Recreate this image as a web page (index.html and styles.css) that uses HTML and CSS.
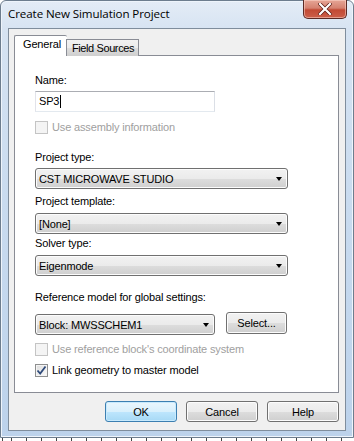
FILE: index.html
```html
<!DOCTYPE html>
<html>
<head>
<meta charset="utf-8">
<link rel="stylesheet" href="styles.css">
</head>
<body>
<div class="window">
  <div class="titlebar">
    <span class="title">Create New Simulation Project</span>
    <div class="close">
      <svg width="14" height="12" viewBox="0 0 14 12"><path d="M2 1 L12 11 M12 1 L2 11" stroke="#5a1a12" stroke-width="3.6" stroke-linecap="square"/><path d="M2 1 L12 11 M12 1 L2 11" stroke="#fff" stroke-width="2.2" stroke-linecap="square"/></svg>
    </div>
  </div>
  <div class="client">
    <div class="tabs">
      <div class="tab active">General</div>
      <div class="tab other">Field Sources</div>
    </div>
    <div class="panel">
      <div class="lbl name">Name:</div>
      <div class="input">SP3<span class="caret"></span></div>
      <div class="check disabled c1"><span class="box"></span><span>Use assembly information</span></div>
      <div class="lbl ptype">Project type:</div>
      <div class="combo wide">
        <span>CST MICROWAVE STUDIO</span><span class="arrow"></span>
      </div>
      <div class="lbl ptemplate">Project template:</div>
      <div class="combo wide">
        <span>[None]</span><span class="arrow"></span>
      </div>
      <div class="lbl solver">Solver type:</div>
      <div class="combo wide">
        <span>Eigenmode</span><span class="arrow"></span>
      </div>
      <div class="lbl ref">Reference model for global settings:</div>
      <div class="row">
        <div class="combo short"><span>Block: MWSSCHEM1</span><span class="arrow"></span></div>
        <div class="btn select">Select...</div>
      </div>
      <div class="check disabled c2"><span class="box"></span><span>Use reference block's coordinate system</span></div>
      <div class="check c3"><span class="box checked"><svg width="11" height="11" viewBox="0 0 11 11"><path d="M1.5 5.5 L4.2 8.5 L9.5 1.5" fill="none" stroke="#2e4a7a" stroke-width="1.8"/></svg></span><span>Link geometry to master model</span></div>
    </div>
    <div class="buttons">
      <div class="btn default">OK</div>
      <div class="btn">Cancel</div>
      <div class="btn">Help</div>
    </div>
  </div>
</div>
<div class="ticks"></div>
</body>
</html>
```

FILE: styles.css
```css
html, body {
  margin: 0;
  padding: 0;
  background: #ffffff;
}
body {
  width: 354px;
  height: 441px;
  overflow: hidden;
  font-family: "Liberation Sans", Arial, sans-serif;
  font-size: 11px;
  letter-spacing: -0.15px;
  color: #000;
  white-space: nowrap;
}
.window {
  box-sizing: border-box;
  width: 354px;
  height: 438px;
  border: 1px solid #6d7d8e;
  border-radius: 6px 6px 0 0;
  background: linear-gradient(180deg, #e4ecf6 0px, #d6e3f2 30px, #c9dbef 200px, #bcd2eb 438px);
  box-shadow: inset 0 0 0 1px #eef4fb;
  display: flex;
  flex-direction: column;
  padding: 0 7px 6px 7px;
}
.titlebar {
  height: 27px;
  display: flex;
  align-items: flex-start;
  position: relative;
  flex: none;
}
.title {
  font-family: "Open Sans", "Noto Sans", sans-serif;
  font-size: 11.6px;
  color: #000;
  margin-top: 5px;
  letter-spacing: -0.1px;
}
.close {
  position: absolute;
  right: -1px;
  top: -1px;
  width: 44px;
  height: 19px;
  box-sizing: border-box;
  border: 1px solid #5b2a25;
  border-top: none;
  border-radius: 0 0 5px 5px;
  background: linear-gradient(180deg, #e6a696 0%, #d58170 45%, #c24a34 55%, #cc5f4a 100%);
  box-shadow: inset 0 0 0 1px rgba(255,220,210,0.5);
  display: flex;
  align-items: center;
  justify-content: center;
}
.client {
  flex: 1;
  box-sizing: border-box;
  border: 1px solid #7f8d9c;
  background: #f0f0f0;
  padding: 7px 6px 0 5px;
  display: flex;
  flex-direction: column;
}
.tabs {
  display: flex;
  align-items: flex-end;
  height: 20px;
  position: relative;
  z-index: 1;
  margin-bottom: -1px;
}
.tab {
  box-sizing: border-box;
  border: 1px solid #898c95;
  border-bottom: none;
  height: 17px;
  padding: 0 0 0 5px;
  line-height: 17px;
  background: linear-gradient(180deg, #f2f2f2 0%, #ebebeb 50%, #dddddd 51%, #cfcfcf 100%);
  margin-left: -1px;
  width: 73px;
  overflow: hidden;
}
.tab.other { letter-spacing: -0.4px; }
.tab.active {
  height: 21px;
  margin-left: 0;
  background: #ffffff;
  padding: 0 0 0 8px;
  line-height: 17px;
  border-right: none;
  width: 53px;
  border-radius: 2px 2px 0 0;
}
.panel {
  box-sizing: border-box;
  height: 338px;
  background: #fff;
  border: 1px solid #898c95;
  padding: 18px 0 0 20px;
  display: flex;
  flex-direction: column;
  align-items: flex-start;
}
.lbl {
  height: 13px;
  line-height: 13px;
}
.lbl.name { margin-bottom: 4px; }
.lbl.ptype { margin-top: 17px; margin-bottom: 4px; }
.lbl.ptemplate { margin-top: 6px; margin-bottom: 5px; }
.lbl.solver { margin-top: 3px; margin-bottom: 5px; }
.lbl.ref { margin-top: 15px; margin-bottom: 4px; }
.input {
  box-sizing: border-box;
  width: 180px;
  height: 21px;
  border: 1px solid #abadb3;
  border-color: #abadb3 #dbdfe6 #e3e9ef #e2e3ea;
  padding: 0 3px;
  line-height: 19px;
  display: flex;
  align-items: center;
}
.caret {
  display: inline-block;
  width: 1px;
  height: 13px;
  background: #000;
  margin-left: 1px;
}
.check {
  display: flex;
  align-items: center;
  height: 13px;
  line-height: 13px;
}
.check .box {
  box-sizing: border-box;
  width: 13px;
  height: 13px;
  border: 1px solid #8e8f8f;
  background: linear-gradient(135deg, #dcdcdc, #fbfbfb);
  box-shadow: inset 0 0 0 1px #f4f4f4;
  margin-right: 4px;
  display: flex;
  align-items: center;
  justify-content: center;
}
.check.disabled { color: #a0a0a0; }
.check.disabled .box {
  border-color: #c4c4c4;
  background: #f4f4f4;
  box-shadow: none;
}
.c1 { margin-top: 9px; }
.c2 { margin-top: 8px; }
.c3 { margin-top: 8px; }
.combo {
  box-sizing: border-box;
  height: 21px;
  border: 1px solid #707070;
  border-radius: 3px;
  background: linear-gradient(180deg, #f2f2f2 0%, #ebebeb 50%, #dddddd 51%, #cfcfcf 100%);
  box-shadow: inset 0 0 0 1px #fcfcfc;
  display: flex;
  align-items: center;
  justify-content: space-between;
  padding: 0 5px 0 3px;
}
.combo.wide { width: 253px; }
.combo.short { width: 180px; margin-top: 2px; }
.arrow {
  width: 0;
  height: 0;
  border-left: 3.5px solid transparent;
  border-right: 3.5px solid transparent;
  border-top: 4px solid #000;
  margin-top: 1px;
}
.row {
  display: flex;
  align-items: flex-start;
  gap: 11px;
  margin-top: 4px;
}
.btn {
  box-sizing: border-box;
  height: 21px;
  border: 1px solid #707070;
  border-radius: 3px;
  background: linear-gradient(180deg, #f2f2f2 0%, #ebebeb 50%, #dddddd 51%, #cfcfcf 100%);
  box-shadow: inset 0 0 0 1px #fcfcfc;
  display: flex;
  align-items: center;
  justify-content: center;
  width: 72px;
}
.btn.select { width: 61px; height: 22px; }
.buttons {
  display: flex;
  justify-content: flex-end;
  gap: 9px;
  margin-top: 8px;
}
.btn.default {
  border-color: #3c7fb1;
  background: linear-gradient(180deg, #eaf6fd 0%, #d9f0fc 50%, #bee6fd 51%, #a7d9f5 100%);
  box-shadow: inset 0 0 0 1px #c8eafd;
}
.ticks {
  height: 3px;
  background: repeating-linear-gradient(90deg, #444 0 1px, transparent 1px 15px);
  background-position: 11px 0;
}
```
